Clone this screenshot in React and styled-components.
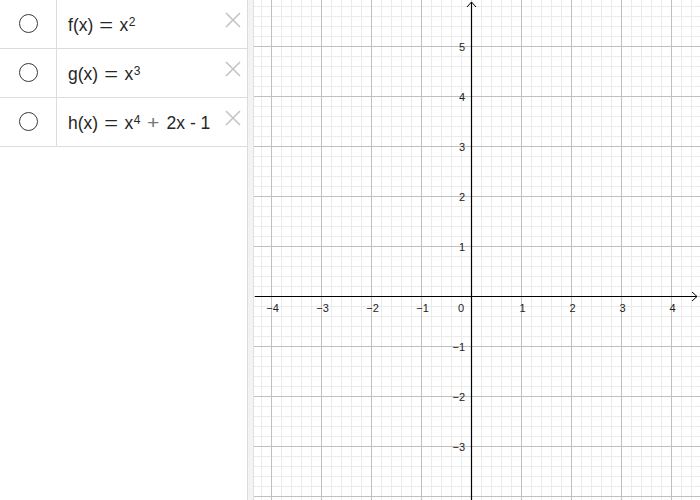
import React from "react";
import styled, { createGlobalStyle } from "styled-components";

const GlobalStyle = createGlobalStyle`
  html, body {
    margin: 0;
    padding: 0;
    background: #fff;
  }
  body {
    font-family: "Liberation Sans", Arial, sans-serif;
  }
`;

const Page = styled.div`
  display: flex;
  width: 700px;
  height: 500px;
  overflow: hidden;
`;

const AlgebraPanel = styled.section`
  width: 248px;
  flex-shrink: 0;
  box-sizing: border-box;
  border-right: 1px solid #dcdcdc;
  background: #fff;
`;

const Row = styled.div`
  display: flex;
  height: 49px;
  box-sizing: border-box;
  border-bottom: 1px solid #dcdcdc;
`;

const MarbleCell = styled.div`
  width: 57px;
  flex-shrink: 0;
  box-sizing: border-box;
  border-right: 1px solid #dcdcdc;
  display: flex;
  align-items: center;
  justify-content: center;
  padding-bottom: 1px;
`;

const Marble = styled.div`
  width: 19px;
  height: 19px;
  box-sizing: border-box;
  border-radius: 50%;
  border: 1.3px solid #3a3a3a;
`;

const Formula = styled.div`
  flex: 1;
  display: flex;
  align-items: center;
  padding: 2px 0 0 11px;
  font-size: 17.5px;
  color: #262626;
  white-space: nowrap;
`;

const Expr = styled.span`
  display: inline-block;
`;

const Sup = styled.sup`
  font-size: 12px;
  vertical-align: 5px;
  line-height: 0;
  margin-left: 0.5px;
`;

const Op = styled.span`
  display: inline-block;
  color: ${(p) => p.$color || "#262626"};
  margin: 0 ${(p) => p.$gap || 7}px;
  transform: scaleX(${(p) => p.$stretch || 1});
`;

const CloseButton = styled.button`
  align-self: flex-start;
  margin: 12px 6px 0 0;
  padding: 0;
  width: 16px;
  height: 16px;
  border: none;
  background: none;
  display: flex;
`;

const Splitter = styled.div`
  width: 6px;
  flex-shrink: 0;
  box-sizing: border-box;
  background: #f3f3f3;
  border-right: 1px solid #e2e2e2;
`;

const GraphView = styled.div`
  flex: 1;
  background: #fff;
`;

const CloseIcon = () => (
  <svg width="16" height="16" viewBox="0 0 16 16">
    <path d="M1 1 L15 15 M15 1 L1 15" stroke="#c4c4c4" strokeWidth="1.6" fill="none" />
  </svg>
);

const functions = [
  { name: "f", body: <>x<Sup>2</Sup></> },
  { name: "g", body: <>x<Sup>3</Sup></> },
  {
    name: "h",
    body: (
      <>
        x<Sup>4</Sup>
        <Op $color="#777" $gap={8} $stretch={1.2}>+</Op>2x - 1
      </>
    ),
  },
];

const OX = 471.5;
const OY = 296.5;
const UNIT = 50;
const LEFT = 254;

const Graph = () => {
  const minorX = [];
  for (let k = -22; k <= 23; k++) {
    const x = OX + k * 10;
    if (x < LEFT || x > 700) continue;
    minorX.push({ x, major: k % 5 === 0 });
  }
  const minorY = [];
  for (let k = -30; k <= 21; k++) {
    const y = OY + k * 10;
    if (y < 0 || y > 500) continue;
    minorY.push({ y, major: k % 5 === 0 });
  }
  const xLabels = [-4, -3, -2, -1, 1, 2, 3, 4];
  const yLabels = [5, 4, 3, 2, 1, -1, -2, -3];
  const label = (n) => (n < 0 ? "\u2212" + Math.abs(n) : String(n));

  return (
    <svg width="446" height="500" viewBox={`${LEFT} 0 446 500`} style={{ display: "block" }}>
      {minorX.filter((l) => !l.major).map((l) => (
        <line key={"mx" + l.x} x1={l.x} y1="0" x2={l.x} y2="500" stroke="#ebebeb" strokeWidth="1" />
      ))}
      {minorY.filter((l) => !l.major).map((l) => (
        <line key={"my" + l.y} x1={LEFT} y1={l.y} x2="700" y2={l.y} stroke="#ebebeb" strokeWidth="1" />
      ))}
      {minorX.filter((l) => l.major).map((l) => (
        <line key={"Mx" + l.x} x1={l.x} y1="0" x2={l.x} y2="500" stroke="#c0c0c0" strokeWidth="1" />
      ))}
      {minorY.filter((l) => l.major).map((l) => (
        <line key={"My" + l.y} x1={LEFT} y1={l.y} x2="700" y2={l.y} stroke="#c0c0c0" strokeWidth="1" />
      ))}

      <line x1="255" y1={OY} x2="697" y2={OY} stroke="#000" strokeWidth="1.2" />
      <line x1={OX} y1="2" x2={OX} y2="500" stroke="#000" strokeWidth="1.2" />
      <path d={`M692 ${OY - 4.5} L697 ${OY} L692 ${OY + 4.5}`} stroke="#000" strokeWidth="1" fill="none" />
      <path d={`M${OX - 4.5} 7 L${OX} 2 L${OX + 4.5} 7`} stroke="#000" strokeWidth="1" fill="none" />

      <g fontFamily='"Liberation Sans", Arial, sans-serif' fontSize="11" fill="#222">
        {xLabels.map((n) => (
          <text key={"xl" + n} x={OX + n * UNIT + 1} y="312" textAnchor="middle">
            {label(n)}
          </text>
        ))}
        <text x="464" y="312" textAnchor="end">0</text>
        {yLabels.map((n) => (
          <text key={"yl" + n} x="465" y={OY - n * UNIT + 4} textAnchor="end">
            {label(n)}
          </text>
        ))}
      </g>
    </svg>
  );
};

export default function App() {
  return (
    <>
      <GlobalStyle />
      <Page>
        <AlgebraPanel>
          {functions.map((f) => (
            <Row key={f.name}>
              <MarbleCell>
                <Marble />
              </MarbleCell>
              <Formula>
                <Expr>
                  {f.name}(x)<Op $stretch={1.35} $gap={8}>=</Op>
                  {f.body}
                </Expr>
              </Formula>
              <CloseButton aria-label="Delete">
                <CloseIcon />
              </CloseButton>
            </Row>
          ))}
        </AlgebraPanel>
        <Splitter />
        <GraphView>
          <Graph />
        </GraphView>
      </Page>
    </>
  );
}
